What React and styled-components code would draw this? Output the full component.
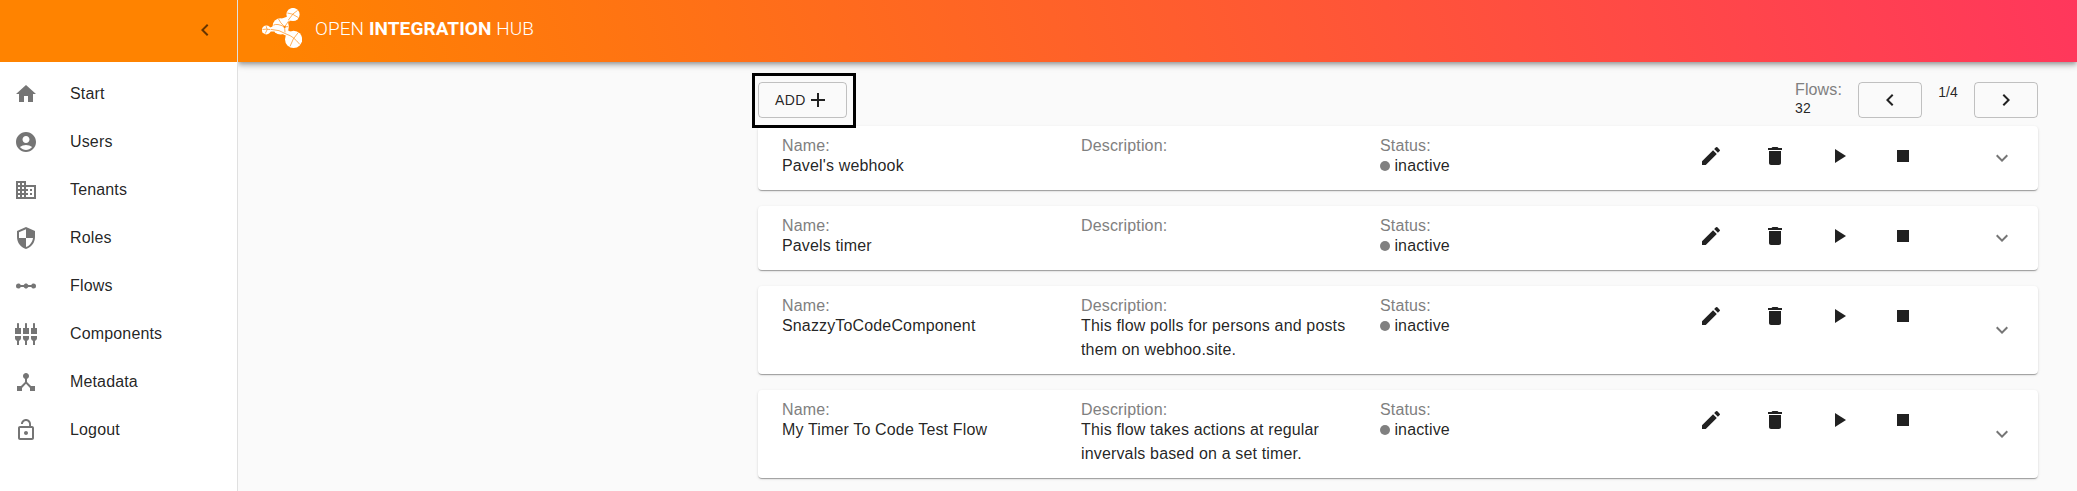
import React from 'react';
import styled, { createGlobalStyle } from 'styled-components';
import {
  MdHome, MdAccountCircle, MdDomain, MdSecurity, MdLinearScale, MdLockOpen,
  MdChevronLeft, MdChevronRight, MdExpandMore, MdAdd, MdEdit, MdDelete,
  MdPlayArrow, MdStop, MdSettingsInputComponent,
} from 'react-icons/md';

const GlobalStyle = createGlobalStyle`
  * { box-sizing: border-box; }
  body {
    margin: 0;
    background: #fafafa;
    color: rgba(0, 0, 0, 0.87);
    font-family: "Liberation Sans", Arial, sans-serif;
    font-size: 16px;
    overflow: hidden;
  }
`;

const Page = styled.div`
  display: flex;
  height: 491px;
`;

const Sidebar = styled.aside`
  position: relative;
  z-index: 1;
  flex: 0 0 238px;
  background: #fff;
  border-right: 1px solid #e0e0e0;
`;

const SidebarHeader = styled.div`
  display: flex;
  align-items: center;
  justify-content: flex-end;
  height: 62px;
  padding: 0 20px 2px 0;
  background: #ff8300;
  color: rgba(0, 0, 0, 0.6);
  svg { width: 24px; height: 24px; }
`;

const Menu = styled.nav`
  padding-top: 8px;
`;

const MenuItem = styled.a`
  display: flex;
  align-items: center;
  height: 48px;
  padding-left: 14px;
  letter-spacing: 0.00938em;
  svg {
    width: 24px;
    height: 24px;
    margin-right: 32px;
    color: #757575;
  }
`;

const Main = styled.main`
  flex: 1;
  min-width: 0;
`;

const TopBar = styled.header`
  display: flex;
  align-items: flex-start;
  height: 62px;
  padding: 8px 0 0 24px;
  color: #fff;
  background: linear-gradient(72deg, #ff8300 2%, #ff375c 100%);
  box-shadow: 0 2px 4px -1px rgba(0, 0, 0, 0.25), 0 4px 5px 0 rgba(0, 0, 0, 0.16),
    0 1px 10px 0 rgba(0, 0, 0, 0.12);
`;

const Brand = styled.div`
  margin: 10px 0 0 13px;
  font-family: Roboto, sans-serif;
  font-size: 19px;
  font-weight: 300;
  line-height: 22px;
  letter-spacing: 0.08px;
  white-space: nowrap;
  b { font-weight: 700; }
`;

const Content = styled.section`
  width: 1280px;
  margin: 20px 0 0 520px;
`;

const Toolbar = styled.div`
  display: flex;
  justify-content: space-between;
  height: 44px;
`;

const AddSlot = styled.div`
  position: relative;
`;

const Highlight = styled.div`
  position: absolute;
  left: -6px;
  top: -9px;
  width: 104px;
  height: 55px;
  border: 3px solid #000;
`;

const OutlinedButton = styled.button`
  display: flex;
  align-items: center;
  justify-content: center;
  width: ${(p) => p.$width}px;
  height: 36px;
  padding: 0;
  border: 1px solid rgba(0, 0, 0, 0.23);
  border-radius: 4px;
  background: transparent;
  color: rgba(0, 0, 0, 0.87);
  font: 14px "Liberation Sans", Arial, sans-serif;
  letter-spacing: 0.02857em;
  svg { width: 24px; height: 24px; }
`;

const Pager = styled.div`
  display: flex;
`;

const Total = styled.div`
  width: 63px;
  font-size: 14px;
  line-height: 20px;
  letter-spacing: 0.00938em;
`;

const PageCount = styled.div`
  width: 52px;
  padding-top: 2px;
  text-align: center;
  font-size: 14px;
  line-height: 16px;
`;

const Label = styled.div`
  color: grey;
  font-size: 16px;
  line-height: 16px;
`;

const Card = styled.article`
  display: flex;
  align-items: center;
  margin-bottom: 16px;
  padding: 12px 12px 12px 24px;
  border-radius: 4px;
  background: #fff;
  letter-spacing: 0.00938em;
  box-shadow: 0 2px 1px -1px rgba(0, 0, 0, 0.2), 0 1px 1px 0 rgba(0, 0, 0, 0.14),
    0 1px 3px 0 rgba(0, 0, 0, 0.12);
`;

const Columns = styled.div`
  display: grid;
  grid-template-columns: repeat(4, 299px);
  align-items: start;
`;

const Value = styled.div`
  line-height: 24px;
`;

const Status = styled(Value)`
  display: flex;
  align-items: center;
  &::before {
    content: '';
    width: 10px;
    height: 10px;
    margin-right: 4.4px;
    border-radius: 50%;
    background: grey;
  }
`;

const Actions = styled.div`
  display: flex;
`;

const ActionButton = styled.span`
  display: flex;
  align-items: center;
  justify-content: center;
  width: 64px;
  height: 36px;
  svg { width: 24px; height: 24px; }
`;

const Expand = styled.span`
  display: flex;
  justify-content: center;
  width: 48px;
  color: rgba(0, 0, 0, 0.54);
  svg { width: 24px; height: 24px; }
`;

const HubIcon = () => (
  <svg viewBox="0 0 24 24" fill="currentColor">
    <path d="M17 16l-4-4V8.82C14.16 8.4 15 7.3 15 6c0-1.66-1.34-3-3-3S9 4.34 9 6c0 1.3.84 2.4 2 2.82V12l-4 4H3v5h5v-3.05l4-4.2 4 4.2V21h5v-5h-4z" />
  </svg>
);

const Logo = () => (
  <svg width="40" height="41" viewBox="0 0 40 41">
    <g fill="#fff">
      <circle cx="31" cy="6.5" r="6.6" />
      <circle cx="4.4" cy="21.9" r="4.5" />
      <circle cx="18.7" cy="18.4" r="8.2" />
      <circle cx="31.6" cy="31.4" r="8.6" />
      <path d="M7.5 19.8L12 18v5.5L8 23.6zM20 10.6L25.6 8.5 28.4 12.4 25 15.5zM21 26.3L25.5 22 29 24 24.6 28z" />
    </g>
    <circle cx="22.6" cy="18.9" r="1.1" fill="#ff8300" />
    <g fill="none" stroke="#ff8300" strokeWidth="0.65">
      <path d="M.5 21.5Q4 20.7 8.4 21.6M4.2 18.2l1 3.4-2 4" />
      <path d="M9 21.4Q17 21.4 25 26.4M11.4 17.2Q15 15 22.6 18.9L27 12.5M16.5 11Q18 14.5 22.6 18.9L26.4 18.6M22.6 18.9l.4 5.5" />
      <path d="M25.4 5Q30 5 36.4 9.6M35.6 2.4Q31 4.6 26.4 12" />
      <path d="M25 26.4Q31 28 37.8 36.4M36.2 24.6Q30.5 30.5 28 38.4" />
    </g>
  </svg>
);

const menu = [
  ['Start', MdHome],
  ['Users', MdAccountCircle],
  ['Tenants', MdDomain],
  ['Roles', MdSecurity],
  ['Flows', MdLinearScale],
  ['Components', MdSettingsInputComponent],
  ['Metadata', HubIcon],
  ['Logout', MdLockOpen],
];

const flows = [
  { name: "Pavel's webhook", description: '' },
  { name: 'Pavels timer', description: '' },
  { name: 'SnazzyToCodeComponent', description: 'This flow polls for persons and posts them on webhoo.site.' },
  { name: 'My Timer To Code Test Flow', description: 'This flow takes actions at regular invervals based on a set timer.' },
];

const actions = [MdEdit, MdDelete, MdPlayArrow, MdStop];

const FlowCard = ({ name, description }) => (
  <Card>
    <Columns>
      <div>
        <Label>Name:</Label>
        <Value>{name}</Value>
      </div>
      <div>
        <Label>Description:</Label>
        <Value>{description}</Value>
      </div>
      <div>
        <Label>Status:</Label>
        <Status>inactive</Status>
      </div>
      <Actions>
        {actions.map((Icon, i) => (
          <ActionButton key={i}><Icon /></ActionButton>
        ))}
      </Actions>
    </Columns>
    <Expand><MdExpandMore /></Expand>
  </Card>
);

export default function App() {
  return (
    <Page>
      <GlobalStyle />
      <Sidebar>
        <SidebarHeader><MdChevronLeft /></SidebarHeader>
        <Menu>
          {menu.map(([label, Icon]) => (
            <MenuItem key={label}><Icon />{label}</MenuItem>
          ))}
        </Menu>
      </Sidebar>
      <Main>
        <TopBar>
          <Logo />
          <Brand>OPEN <b>INTEGRATION</b> HUB</Brand>
        </TopBar>
        <Content>
          <Toolbar>
            <AddSlot>
              <OutlinedButton $width={89}>ADD<MdAdd /></OutlinedButton>
              <Highlight />
            </AddSlot>
            <Pager>
              <Total><Label>Flows:</Label>32</Total>
              <OutlinedButton $width={64}><MdChevronLeft /></OutlinedButton>
              <PageCount>1/4</PageCount>
              <OutlinedButton $width={64}><MdChevronRight /></OutlinedButton>
            </Pager>
          </Toolbar>
          {flows.map((flow) => <FlowCard key={flow.name} {...flow} />)}
        </Content>
      </Main>
    </Page>
  );
}
